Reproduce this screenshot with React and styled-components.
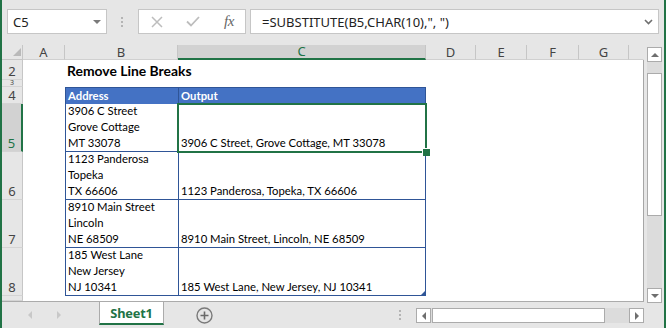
import React from 'react';
import styled, { createGlobalStyle, css } from 'styled-components';

const GREEN = '#217346';
const BLUE = '#2f5597';
const HEAD_BG = '#e6e6e6';
const SEL_BG = '#d2d2d2';

const Global = createGlobalStyle`
  html, body { margin: 0; padding: 0; background: #fff; }
  body { width: 666px; height: 328px; overflow: hidden; }
  * { box-sizing: border-box; }
`;

const Window = styled.div`
  width: 666px;
  height: 328px;
  display: flex;
  flex-direction: column;
  background: ${HEAD_BG};
  border-left: 2px solid ${GREEN};
  border-right: 2px solid ${GREEN};
  font-family: "Noto Sans", sans-serif;
  overflow: hidden;
`;

/* ---------- formula bar ---------- */
const FormulaBar = styled.div`
  height: 45px;
  flex: none;
  display: flex;
  align-items: flex-start;
  padding: 9px 5px 0 5px;
`;

const Field = styled.div`
  height: 25px;
  background: #fff;
  border: 1px solid #c6c6c6;
  display: flex;
  align-items: center;
  font-size: 13px;
  color: #222;
`;

const NameBox = styled(Field)`
  width: 100px;
  justify-content: space-between;
  padding: 0 5px 0 5px;
`;

const DropTriangle = styled.span`
  width: 0;
  height: 0;
  border-left: 4px solid transparent;
  border-right: 4px solid transparent;
  border-top: 4px solid #7a7a7a;
`;

const DotStack = styled.div`
  display: flex;
  flex-direction: column;
  gap: 2px;
  margin: ${p => p.$margin};
`;

const Dot = styled.span`
  width: 2px;
  height: 2px;
  background: #b4b4b4;
`;

const FxBox = styled(Field)`
  width: 108px;
  margin-left: 15px;
  display: grid;
  grid-template-columns: 36px 36px 36px;
  align-items: center;
  justify-items: center;
`;

const FxLabel = styled.span`
  font-family: "Liberation Serif", serif;
  font-style: italic;
  font-size: 15px;
  color: #666;
  letter-spacing: -0.5px;
  line-height: 1;
`;

const FormulaInput = styled(Field)`
  flex: 1;
  margin-left: 4px;
  justify-content: space-between;
  padding: 0 5px 0 11px;
  white-space: pre;
`;

/* ---------- main area ---------- */
const Main = styled.div`
  flex: 1;
  display: flex;
  min-height: 0;
`;

const LeftCol = styled.div`
  width: 642px;
  display: flex;
  flex-direction: column;
`;

const Sheet = styled.div`
  display: grid;
  grid-template-columns: 21px 42px 113px 248px 50px 51px 52px 50px 15px;
  grid-template-rows: 15px 20px 7px 17px 48px 48px 48px 48px 5px;
  background: #fff;
`;

const Corner = styled.div`
  background: ${HEAD_BG};
  border-right: 1px solid #c6c6c6;
  border-bottom: 1px solid #c6c6c6;
  display: flex;
  align-items: flex-end;
  justify-content: flex-end;
  padding: 0 1px 3px 0;
`;

const CornerTriangle = styled.span`
  width: 0;
  height: 0;
  border-left: 8px solid transparent;
  border-bottom: 8px solid #b9b9b9;
`;

const ColHead = styled.div`
  background: ${p => (p.$sel ? SEL_BG : HEAD_BG)};
  color: ${p => (p.$sel ? GREEN : '#444')};
  font-size: 13px;
  line-height: 1;
  display: flex;
  align-items: center;
  justify-content: center;
  border-right: 1px solid ${p => (p.$last ? 'transparent' : '#c6c6c6')};
  border-bottom: ${p => (p.$sel ? `2px solid ${GREEN}` : '1px solid #d0d0d0')};
`;

const RowHead = styled.div`
  background: ${p => (p.$sel ? SEL_BG : HEAD_BG)};
  color: ${p => (p.$sel ? GREEN : '#444')};
  font-size: ${p => (p.$tiny ? '7px' : '13px')};
  line-height: ${p => (p.$tiny ? '6px' : '14px')};
  display: flex;
  align-items: flex-end;
  justify-content: center;
  padding-bottom: ${p => (p.$tiny ? '0' : '1px')};
  overflow: hidden;
  border-bottom: 1px solid #d4d4d4;
  border-right: ${p => (p.$sel ? `2px solid ${GREEN}` : '1px solid #c6c6c6')};
`;

const Cell = styled.div`
  position: relative;
  background: ${p => p.$fill || '#fff'};
  color: ${p => (p.$fill ? '#fff' : '#000')};
  font-family: Lato, "Liberation Sans", sans-serif;
  font-size: 11.3px;
  font-weight: ${p => (p.$bold ? 700 : 400)};
  line-height: 16px;
  white-space: nowrap;
  display: flex;
  flex-direction: column;
  justify-content: flex-end;
  padding: 0 2px;
  ${p => p.$l && css`border-left: 1px solid ${BLUE};`}
  ${p => p.$r && css`border-right: 1px solid ${BLUE};`}
  ${p => p.$t && css`border-top: 1px solid ${BLUE};`}
  ${p => p.$b && css`border-bottom: 1px solid ${BLUE};`}
  ${p => p.$edge && css`border-right: 1px solid #a6a6a6;`}
  ${p => p.$selected && css`
    &::after {
      content: '';
      position: absolute;
      top: -1px; left: -2px; right: -2px; bottom: -2px;
      border: 2px solid ${GREEN};
      z-index: 2;
      pointer-events: none;
    }
    &::before {
      content: '';
      position: absolute;
      width: 7px; height: 7px;
      right: -5px; bottom: -5px;
      background: ${GREEN};
      border-left: 1px solid #fff;
      border-top: 1px solid #fff;
      z-index: 3;
    }
  `}
  ${p => p.$handle && css`
    &::after {
      content: '';
      position: absolute;
      right: 0; bottom: 0;
      width: 0; height: 0;
      border-left: 4px solid transparent;
      border-bottom: 4px solid ${BLUE};
    }
  `}
`;

const Title = styled.span`
  position: relative;
  z-index: 1;
  font-size: 13.9px;
  font-weight: 700;
  padding-bottom: 1px;
`;

/* ---------- tab bar ---------- */
const TabBar = styled.div`
  flex: 1;
  border-top: 1px solid #ababab;
  display: flex;
  align-items: flex-start;
`;

const NavArrows = styled.div`
  display: flex;
  align-items: center;
  gap: 25px;
  margin: 9px 0 0 26px;
  height: 8px;
`;

const NavArrow = styled.span`
  width: 0;
  height: 0;
  border-top: 4px solid transparent;
  border-bottom: 4px solid transparent;
  ${p => (p.$dir === 'left'
    ? css`border-right: 4px solid #c8c8c8;`
    : css`border-left: 4px solid #c8c8c8;`)}
`;

const SheetTab = styled.div`
  margin-left: 38px;
  width: 65px;
  height: 23px;
  background: #fff;
  border-left: 1px solid #ababab;
  border-right: 1px solid #ababab;
  border-bottom: 2px solid ${GREEN};
  display: flex;
  align-items: center;
  justify-content: center;
  font-size: 12.8px;
  font-weight: 700;
  color: ${GREEN};
  letter-spacing: -0.2px;
`;

const AddSheet = styled.span`
  margin: 5px 0 0 32px;
  display: flex;
`;

const Spacer = styled.div`
  flex: 1;
`;

const ScrollBtn = styled.div`
  width: 15px;
  height: 15px;
  flex: none;
  background: #fff;
  border: 1px solid #ababab;
  display: flex;
  align-items: center;
  justify-content: center;
`;

const Arrow = styled.span`
  width: 0;
  height: 0;
  ${p => p.$dir === 'up' && css`
    border-left: 4px solid transparent; border-right: 4px solid transparent;
    border-bottom: 4px solid #6f6f6f;`}
  ${p => p.$dir === 'down' && css`
    border-left: 4px solid transparent; border-right: 4px solid transparent;
    border-top: 4px solid #6f6f6f;`}
  ${p => p.$dir === 'left' && css`
    border-top: 4px solid transparent; border-bottom: 4px solid transparent;
    border-right: 4px solid #6f6f6f;`}
  ${p => p.$dir === 'right' && css`
    border-top: 4px solid transparent; border-bottom: 4px solid transparent;
    border-left: 4px solid #6f6f6f;`}
`;

const HScroll = styled.div`
  margin: 6px 0 0 15px;
  width: 228px;
  height: 15px;
  display: flex;
  background: #dcdcdc;
`;

const HThumb = styled.div`
  width: 173px;
  margin-left: 1px;
  background: #fff;
  border: 1px solid #ababab;
`;

const VScroll = styled.div`
  width: 20px;
  display: flex;
  flex-direction: column;
  padding: 2px 0 0 3px;
`;

const VTrack = styled.div`
  width: 15px;
  height: 226px;
  background: #dcdcdc;
  padding-top: 11px;
`;

const VThumb = styled.div`
  width: 15px;
  height: 143px;
  background: #fff;
  border: 1px solid #ababab;
`;

/* ---------- data ---------- */
const COLS = ['A', 'B', 'C', 'D', 'E', 'F', 'G', ''];

const ROWS = [
  { n: 5, addr: ['3906 C Street', 'Grove Cottage', 'MT 33078'], out: '3906 C Street, Grove Cottage, MT 33078', sel: true },
  { n: 6, addr: ['1123 Panderosa', 'Topeka', 'TX 66606'], out: '1123 Panderosa, Topeka, TX 66606' },
  { n: 7, addr: ['8910 Main Street', 'Lincoln', 'NE 68509'], out: '8910 Main Street, Lincoln, NE 68509' },
  { n: 8, addr: ['185 West Lane', 'New Jersey', 'NJ 10341'], out: '185 West Lane, New Jersey, NJ 10341', last: true },
];

const Blanks = () => (
  <>
    <Cell />
    <Cell />
    <Cell />
    <Cell />
    <Cell $edge />
  </>
);

export default function App() {
  return (
    <>
      <Global />
      <Window>
        <FormulaBar>
          <NameBox>
            <span>C5</span>
            <DropTriangle />
          </NameBox>
          <DotStack $margin="8px 0 0 14px">
            <Dot /><Dot /><Dot />
          </DotStack>
          <FxBox>
            <svg width="12" height="12" viewBox="0 0 12 12">
              <path d="M1 1 L11 11 M11 1 L1 11" stroke="#bdbdbd" strokeWidth="1.5" fill="none" />
            </svg>
            <svg width="14" height="11" viewBox="0 0 14 11">
              <path d="M1 5.5 L5 9.5 L13 1" stroke="#bdbdbd" strokeWidth="1.8" fill="none" />
            </svg>
            <FxLabel>fx</FxLabel>
          </FxBox>
          <FormulaInput>
            <span>{'=SUBSTITUTE(B5,CHAR(10),", ")'}</span>
            <svg width="9" height="6" viewBox="0 0 9 6">
              <path d="M1 1 L4.5 4.5 L8 1" stroke="#6f6f6f" strokeWidth="1.6" fill="none" />
            </svg>
          </FormulaInput>
        </FormulaBar>

        <Main>
          <LeftCol>
            <Sheet>
              <Corner><CornerTriangle /></Corner>
              {COLS.map((c, i) => (
                <ColHead key={`h${i}`} $sel={c === 'C'} $last={i === COLS.length - 1}>{c}</ColHead>
              ))}

              <RowHead>2</RowHead>
              <Cell />
              <Cell><Title>Remove Line Breaks</Title></Cell>
              <Cell />
              <Blanks />

              <RowHead $tiny>3</RowHead>
              <Cell />
              <Cell />
              <Cell />
              <Blanks />

              <RowHead>4</RowHead>
              <Cell />
              <Cell $fill="#4472c4" $bold $l $t>Address</Cell>
              <Cell $fill="#4472c4" $bold $l $r $t>Output</Cell>
              <Blanks />

              {ROWS.map(r => (
                <React.Fragment key={r.n}>
                  <RowHead $sel={r.sel}>{r.n}</RowHead>
                  <Cell />
                  <Cell $l $b>
                    {r.addr.map(line => <span key={line}>{line}</span>)}
                  </Cell>
                  <Cell $l $r $b $selected={r.sel} $handle={r.last}>
                    <span>{r.out}</span>
                  </Cell>
                  <Blanks />
                </React.Fragment>
              ))}

              <RowHead />
              <Cell />
              <Cell />
              <Cell />
              <Blanks />
            </Sheet>

            <TabBar>
              <NavArrows>
                <NavArrow $dir="left" />
                <NavArrow $dir="right" />
              </NavArrows>
              <SheetTab>Sheet1</SheetTab>
              <AddSheet>
                <svg width="17" height="17" viewBox="0 0 17 17">
                  <circle cx="8.5" cy="8.5" r="7.5" stroke="#7a7a7a" strokeWidth="1.4" fill="none" />
                  <path d="M8.5 4.5 V12.5 M4.5 8.5 H12.5" stroke="#6a6a6a" strokeWidth="1.6" />
                </svg>
              </AddSheet>
              <Spacer />
              <DotStack $margin="8px 0 0 0">
                <Dot /><Dot /><Dot />
              </DotStack>
              <HScroll>
                <ScrollBtn><Arrow $dir="left" /></ScrollBtn>
                <HThumb />
                <Spacer />
                <ScrollBtn><Arrow $dir="right" /></ScrollBtn>
              </HScroll>
            </TabBar>
          </LeftCol>

          <VScroll>
            <ScrollBtn><Arrow $dir="up" /></ScrollBtn>
            <VTrack><VThumb /></VTrack>
            <ScrollBtn><Arrow $dir="down" /></ScrollBtn>
          </VScroll>
        </Main>
      </Window>
    </>
  );
}
